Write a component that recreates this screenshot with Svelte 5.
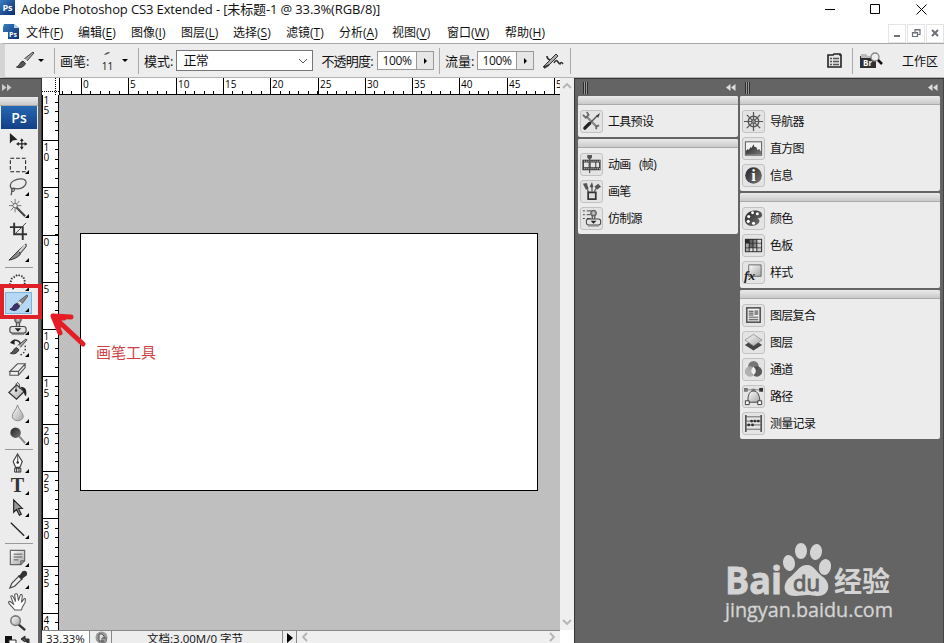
<script lang="ts">
  type Item = { icon: string; label: string };

  const menus = [
    { label: "文件", key: "F", width: 52 },
    { label: "编辑", key: "E", width: 53 },
    { label: "图像", key: "I", width: 50 },
    { label: "图层", key: "L", width: 52 },
    { label: "选择", key: "S", width: 53 },
    { label: "滤镜", key: "T", width: 53 },
    { label: "分析", key: "A", width: 53 },
    { label: "视图", key: "V", width: 55 },
    { label: "窗口", key: "W", width: 58 },
    { label: "帮助", key: "H", width: 50 },
  ];

  const toolGroups = [
    ["move", "marquee", "lasso", "wand", "crop", "slice"],
    ["heal", "brush", "stamp", "history", "eraser", "bucket", "blur", "dodge"],
    ["pen", "type", "select", "line"],
    ["notes", "eyedropper", "hand", "zoom"],
  ];
  const noFlyout = ["move", "crop", "hand", "zoom"];
  let activeTool = $state("brush");

  const leftPanels: Item[][] = [
    [{ icon: "presets", label: "工具预设" }],
    [
      { icon: "animation", label: "动画 (帧)" },
      { icon: "brushes", label: "画笔" },
      { icon: "clone", label: "仿制源" },
    ],
  ];
  const rightPanels: Item[][] = [
    [
      { icon: "navigator", label: "导航器" },
      { icon: "histogram", label: "直方图" },
      { icon: "info", label: "信息" },
    ],
    [
      { icon: "color", label: "颜色" },
      { icon: "swatches", label: "色板" },
      { icon: "styles", label: "样式" },
    ],
    [
      { icon: "comps", label: "图层复合" },
      { icon: "layers", label: "图层" },
      { icon: "channels", label: "通道" },
      { icon: "paths", label: "路径" },
      { icon: "log", label: "测量记录" },
    ],
  ];

  // Rulers: 5 units every 47.3px
  const step = 47.3;
  const hMajor = Array.from({ length: 11 }, (_, i) => ({ x: Math.round(22 + i * step), n: i * 5 }));
  const hMinor = Array.from({ length: 53 }, (_, i) => Math.round(3 + i * (step / 5)));
  const vMajor = Array.from({ length: 12 }, (_, i) => ({
    y: Math.round(-2.3 + i * step),
    digits: String(Math.abs(i * 5 - 15)).split(""),
  }));
  const vMinor = Array.from({ length: 56 }, (_, i) => Math.round(7 + i * (step / 5)));

  const brushArt =
    '<path d="M20 2L11 9l2 3L21 3z" fill="#a5a5a5" stroke="#333" stroke-width=".9"/><path d="M11 9l3 3" stroke="#fff" stroke-width="1.500"/><path d="M10 11l2.500 2.500c-2 4-6 5-9 3.500 3-.5 3-5 6.500-6z" fill="#555" stroke="#222" stroke-width=".9"/>';
  const stampArt =
    '<path d="M10 8v5M13 8v5" stroke="#555" stroke-width="1.500"/><circle cx="11.500" cy="5" r="3.500" fill="url(#ball)" stroke="#555"/><rect x="3" y="12" width="17" height="7" rx="2.500" fill="#e4e4e4" stroke="#444" stroke-width="1.200"/><path d="M8 14h7l-3.500 3.500z" fill="#222"/><path d="M5 20.500h13" stroke="#888"/>';

  const icons: Record<string, string> = {
    move: '<path d="M3 1v11l3-3 5-1z" fill="#222"/><path d="M15.500 8v9M11 12.500h9" stroke="#222" stroke-width="1.200"/><path d="M15.500 6.500l-2 3h4zM15.500 18.500l-2-3h4zM9.500 12.500l3-2v4zM21.500 12.500l-3-2v4z" fill="#222"/>',
    marquee: '<rect x="3.500" y="4.500" width="16" height="14" fill="none" stroke="#222" stroke-width="1.100" stroke-dasharray="4 2"/>',
    lasso: '<path d="M6 14C2 12 3 7 7 5c5-3 13-3 13 2-1 6-8 7-12 6-2-1-4 1-3 3 3 1 4-3 1-3-2 1 0 4-2 7" fill="none" stroke="#555" stroke-width="1.300"/>',
    wand: '<path d="M9 9l10 10" stroke="#444" stroke-width="2.200"/><path d="M8.500 1v14M2 8h13M4 3l9 10M13 3L4 13" stroke="#666" stroke-width=".9"/><circle cx="8.500" cy="8" r="2.300" fill="#eee" stroke="#666"/>',
    crop: '<path d="M7.500 3v12H21M3 7.500h13.500V21" fill="none" stroke="#333" stroke-width="2"/><path d="M8 15L20 3" stroke="#444"/>',
    slice: '<path d="M20 2l-8 7 2 3 6-7z" fill="#bbb" stroke="#333"/><path d="M12 9L2 19c6-1 9-3 12-6z" fill="#888" stroke="#333"/><path d="M19 3l-7 8" stroke="#fff"/>',
    heal: '<path d="M7 19L3 14l2-6 6-4 6 2 2 6-3 6" fill="#f4f4f4" stroke="#333" stroke-width="2" stroke-dasharray="1.500 1.500"/>',
    brush: '<path d="M21 2l-8 6-3 4 2 2 4-3 6-8z" fill="#8a8985" stroke="#444" stroke-width=".8"/><path d="M12 9l3 3" stroke="#eee" stroke-width="2"/><path d="M10 11l3 3c-2 5-6 5-10 3 3 0 3-5 7-6z" fill="#41306e" stroke="#28233c"/>',
    stamp: stampArt,
    history: brushArt + '<path d="M5 5c4-3 8-1 9 2" fill="none" stroke="#333" stroke-width="1.600"/><path d="M3 6l5-4v6z" fill="#222"/><path d="M19 9c1 5-1 8-5 10" fill="none" stroke="#222" stroke-width="1.300" stroke-dasharray="1.500 2"/>',
    eraser: '<path d="M3 13L11 5h8l-7 8zM3 13v4h9v-4M12 17l7-8V5" fill="#eee" stroke="#555" stroke-width="1.200"/>',
    bucket: '<path d="M10 4L2 12l8 7 8-8z" fill="url(#metal)" stroke="#333" stroke-width="1.300"/><path d="M9.500 10V3q2-3 3.500 1v4" fill="none" stroke="#444"/><path d="M14 6c6 0 7 4 6 10-2-1-2-3-3-6" fill="#222"/><circle cx="9.500" cy="10" r="1.300" fill="#222"/>',
    blur: '<path d="M11 2c-1 5-5.500 8-5.500 12 0 6 11.500 6 11.500 0 0-4-5-7-6-12z" fill="url(#metal)" stroke="#888"/>',
    dodge: '<path d="M12 11l7 8" stroke="#888" stroke-width="2"/><circle cx="9" cy="8" r="5.500" fill="url(#dark)"/>',
    pen: '<path d="M11 1L6.500 9 9 15h4.500L16 9z" fill="#fff" stroke="#444" stroke-width="1.200"/><path d="M11.200 2v8" stroke="#444"/><circle cx="11.200" cy="10" r="1.300" fill="#222"/><path d="M8 16h6.500v4H8zM10 16v4M12.500 16v4" fill="#ddd" stroke="#333"/>',
    type: '<text x="11" y="18" font-family="Liberation Serif, serif" font-weight="bold" font-size="21" text-anchor="middle" fill="#333">T</text>',
    select: '<path d="M7 3v13l3-3 3 6 2-1-3-6h4z" fill="#999" stroke="#222" stroke-width="1.200"/>',
    line: '<path d="M4 4l14 13.500" stroke="#222" stroke-width="1.400"/>',
    notes: '<path d="M3.500 3.500h15v11l-4 4h-11z" fill="url(#metal)" stroke="#666" stroke-width="1.200"/><path d="M7 7.500h9M7 10.500h9M7 13.500h5M14.500 18.500v-4h4" stroke="#555" fill="none"/>',
    eyedropper: '<path d="M13 7L5 15l-2 5 5-2 8-8" fill="#eee" stroke="#444" stroke-width="1.200"/><path d="M12 7l4 4M14 7l3-4q4-1 3 3l-4 3z" fill="#333" stroke="#333" stroke-width="1.800"/>',
    hand: '<path d="M8 20C6 16 0 13 2 11c2-1 4 3 5 3L4 6c0-2 2-1 3 1l2 4-1-7c1-2 3-1 3 0l1 6 2-6c2-1 2 1 2 2l-1 6 3-4c2-1 1 2 1 4l-3 5-1 3z" fill="#fff" stroke="#555" stroke-width="1.100"/>',
    zoom: '<path d="M12 12l7 6" stroke="#333" stroke-width="2.500"/><circle cx="9" cy="8" r="5" fill="url(#metal)" stroke="#777" stroke-width="1.600"/>',

    presets: '<path d="M6 6l11 11" stroke="#888" stroke-width="2.500"/><path d="M17 5l-8 8" stroke="#555" stroke-width="1.500"/><path d="M9 13l-5 5" stroke="#222" stroke-width="3.500" stroke-linecap="round"/><path d="M2 4l3 3 3-3-2-3M16 19l0-3 3-1" stroke="#666" stroke-width="1.800"/><path d="M16 5l4-3-2 5z" fill="#333"/>',
    animation: '<rect x="1.500" y="6" width="19" height="11" fill="#333"/><path d="M3 9h5v5H3zM10 9h5v5h-5zM16 9h3v5h-3z" fill="#e5e5e5"/><path d="M3 7.500h17M3 15.500h17" stroke="#fff" stroke-dasharray="1 1"/><path d="M9 2v18" stroke="#555" stroke-width="1.300"/><path d="M6.500 1h5v3L9 6 6.500 4z" fill="#555"/>',
    brushes: '<path d="M8 12L5 5M11.500 11V6M14 11l3-5" stroke="#666" stroke-width="1.500"/><path d="M2 3l4-1 2 6-3 1zM9 6l2.500-5L13 6l-2 1zM14 6l4-3 3 3-4 3z" fill="#555"/><path d="M7.500 12h8v7h-8z" fill="#ddd" stroke="#333" stroke-width="1.800"/>',
    clone: '<path d="M2 3h2M6 3h5M2 7h2M6 7h4M2 11h2M6 11h4" stroke="#444"/>' + `<g transform="translate(3 1) scale(.88)">${stampArt}</g>`,
    navigator: '<path d="M11 1v20M1 11h20M4 4l14 14M18 4L4 18" stroke="#555" stroke-width="1.300"/><circle cx="11" cy="11" r="5.500" stroke="#555" stroke-width="1.500"/><circle cx="11" cy="11" r="2" fill="#999" stroke="#444"/>',
    histogram: '<rect x="2.500" y="4" width="17" height="14" fill="#f2f2f2" stroke="#555"/><path d="M3 17.500v-4l2-2 1 1 2-3 1 1 2-4 1 3 2 0 1 3 2-1 2 3v3z" fill="url(#dark)"/>',
    info: '<circle cx="11" cy="11" r="8.700" fill="url(#dark)"/><text x="11" y="17" text-anchor="middle" font-family="Liberation Serif, serif" font-weight="bold" font-size="17" fill="#fff">i</text>',
    color: '<path d="M18 4c-5-3-15-1-16 7-1 7 7 10 13 6 3-2 3-5 0-6 5 0 7-4 3-7z" fill="url(#dark)"/><g fill="#fff"><circle cx="6" cy="9" r="1.600"/><circle cx="10" cy="5" r="1.500"/><circle cx="15" cy="6" r="1.600"/><circle cx="5.500" cy="14" r="1.600"/><circle cx="11" cy="16" r="1.600"/></g>',
    swatches: '<rect x="2" y="4" width="18" height="14" fill="#2a2a2a"/><path d="M3 9h3v4H3zM3 14h3v3H3z" fill="#aaa"/><path d="M7 5h3v3H7zM7 9h3v4H7z" fill="#666"/><path d="M7 14h3v3H7zM11 14h3v3h-3zM15 5h4v3h-4z" fill="#ddd"/><path d="M11 5h3v3h-3zM11 9h3v4h-3z" fill="#888"/><path d="M15 9h4v4h-4zM15 14h4v3h-4z" fill="#ccc"/>',
    styles: '<path d="M6 3h13v12H6z" fill="url(#metal)" stroke="#666"/><text x="1" y="18.500" font-family="Liberation Serif, serif" font-style="italic" font-weight="bold" font-size="14" fill="#222">fx</text>',
    comps: '<rect x="4" y="3" width="14" height="15" fill="#f4f4f4" stroke="#555" stroke-width="1.700"/><path d="M6 6.500h5M6 8.500h5M6 10.500h5M6 15.500h10" stroke="#333"/><path d="M12 5.500h4v5h-4zM6 12h10v2H6z" fill="#888"/>',
    layers: '<path d="M2 13.500l9-6 9 6-9 6z" fill="#444"/><path d="M2 8.500l9-6 9 6-9 6z" fill="url(#metal)" stroke="#888" stroke-width=".8"/>',
    channels: '<circle cx="11" cy="7.500" r="5.500" fill="#777"/><circle cx="7.500" cy="13" r="5.500" fill="#aaa" opacity=".9"/><circle cx="14.500" cy="13" r="5.500" fill="#444" opacity=".85"/><path d="M11 8q5 4 0 9-5-5 0-9z" fill="#eee"/>',
    paths: '<path d="M5 17q0-12 6-12t7 12z" fill="url(#metal)" stroke="#444"/><path d="M3 4h16" stroke="#888"/><path d="M1 2h4v4H1zM9 3h4v3H9z" fill="#777"/><path d="M17 2h4v4h-4z" fill="#333"/><path d="M2.500 15.500h4v4h-4zM15.500 15.500h4v4h-4z" fill="#fff" stroke="#333"/>',
    log: '<path d="M3 3h16v14H3z" fill="#e5e5e5"/><path d="M3 2v18M19 2v18" stroke="#333" stroke-width="1.400"/><path d="M3 4h16M3 8.500h16M3 12.500h16M3 17h16" stroke="#555" stroke-width=".9"/><g fill="#333"><circle cx="9" cy="8.500" r="1.500"/><circle cx="12.500" cy="8.500" r="1.500"/><circle cx="16" cy="8.500" r="1.500"/><circle cx="6" cy="12.500" r="1.500"/><circle cx="10" cy="12.500" r="1.500"/></g>',
    optionBrush: brushArt,
  };
</script>

{#snippet icon(name: string)}
  <svg class="icon" width="22" height="22" viewBox="0 0 22 22" fill="none">{@html icons[name]}</svg>
{/snippet}

{#snippet column(groups: Item[][])}
  <div class="column">
    <div class="dock-head">
      <svg width="7" height="12"><path d="M1.500 0v12M3.500 0v12M5.500 0v12" stroke="#2c2c2c" /><path d="M2.500 0v12M4.500 0v12" stroke="#999" /></svg>
      <svg width="10" height="8"><path d="M4.500 0v7L0 3.500zM9.500 0v7L5 3.500z" fill="#ddd" /></svg>
    </div>
    {#each groups as group}
      <div class="panel">
        <div class="grip"></div>
        {#each group as item}
          <div class="panel-item">
            <span class="icon-box">{@render icon(item.icon)}</span>
            <span class="panel-label">{item.label}</span>
          </div>
        {/each}
      </div>
    {/each}
  </div>
{/snippet}

<svg class="defs" width="0" height="0">
  <defs>
    <linearGradient id="metal" x1="0" y1="0" x2="1" y2="1"><stop stop-color="#fff" /><stop offset="1" stop-color="#a5a5a5" /></linearGradient>
    <linearGradient id="dark" x1="0" y1="0" x2="1" y2="1"><stop stop-color="#222" /><stop offset="1" stop-color="#777" /></linearGradient>
    <radialGradient id="ball"><stop stop-color="#ddd" /><stop offset="1" stop-color="#666" /></radialGradient>
    <linearGradient id="blue" x1="0" y1="0" x2="1" y2="1"><stop stop-color="#397fc0" /><stop offset="1" stop-color="#0b2c70" /></linearGradient>
  </defs>
</svg>

<div class="app">
  <header class="titlebar">
    <svg class="app-logo" width="16" height="16"><rect width="15" height="15" fill="url(#blue)" /><text x="7.500" y="11" font-size="9" font-weight="bold" text-anchor="middle" fill="#fff">Ps</text></svg>
    <span class="title">Adobe Photoshop CS3 Extended - [未标题-1 @ 33.3%(RGB/8)]</span>
    <svg class="window-controls" width="104" height="12" fill="none" stroke="#000">
      <path d="M0 6.500h10M45.500 1.500h9v9h-9zM91.500 1.500l10 10M101.500 1.500l-10 10" />
    </svg>
  </header>

  <nav class="menubar">
    <svg class="doc-logo" width="17" height="16"><path d="M1 0h10l5 4v11H5V8H0V3z" fill="url(#blue)" /><path d="M11 0v4h5" fill="#b8d4ef" /><text x="10" y="13" font-size="7" font-weight="bold" text-anchor="middle" fill="#fff">Ps</text></svg>
    {#each menus as menu}
      <span class="menu" style:width="{menu.width}px">{menu.label}(<u>{menu.key}</u>)</span>
    {/each}
    <div class="doc-controls">
      <span><svg width="16" height="17"><path d="M5 11h6" stroke="#6c7077" stroke-width="2" /></svg></span>
      <span><svg width="16" height="17"><path d="M7 7V4.500h5v5h-2M4.500 7.500h5v4h-5zM4 8h6M7 5h5" fill="none" stroke="#6c7077" stroke-width="1.200" /></svg></span>
      <span><svg width="16" height="17"><path d="M5 5l6 6M11 5l-6 6" stroke="#6c7077" stroke-width="2" /></svg></span>
    </div>
  </nav>

  <div class="options">
    <div class="cell current">{@render icon("optionBrush")}<i class="down"></i></div>
    <div class="cell brush-cell">
      <span>画笔:</span>
      <span class="brush-size"><svg width="8" height="8"><path d="M1 4q2-3 6-3-1 2-6 3z" fill="#444" /></svg>11</span>
      <i class="down"></i>
    </div>
    <div class="cell blend-cell">
      <span>模式:</span>
      <div class="select">正常<svg width="10" height="6"><path d="M1 1l4 4 4-4" fill="none" stroke="#555" /></svg></div>
      <span class="opacity-label">不透明度:</span>
      <div class="spin"><span>100%</span><b></b></div>
    </div>
    <div class="cell flow-cell">
      <span>流量:</span>
      <div class="spin"><span>100%</span><b></b></div>
      <svg width="22" height="20" viewBox="0 0 22 20" fill="none"><path d="M1 16l4-4 9-9 2 2-9 9z" fill="#aaa" stroke="#333" /><path d="M5 5q0 3 3 4M2 17l5-3M12 12c3-6 4 1 6 1q1-3 3 0" stroke="#333" stroke-width="1.600" /></svg>
    </div>
    <div class="cell palette-cell">
      <svg width="15" height="15"><path d="M1 2h5l1-1h6v1h1v12H1z" fill="#e5e5e5" stroke="#222" stroke-width="1.600" /><path d="M3 5.500h2M6 5.500h6M3 8.500h2M6 8.500h6M3 11.500h2M6 11.500h6" stroke="#555" stroke-width="1.400" /></svg>
    </div>
    <div class="workspace-cell">
      <svg width="23" height="17" viewBox="0 0 23 17"><path d="M0 4h16v12H0z" fill="#303030" /><path d="M1 2h5l2 2h7v2H1z" fill="#bbb" /><text x="3" y="14" font-size="8" font-weight="bold" fill="#fff">Br</text><circle cx="15" cy="5" r="4" fill="#eee" stroke="#888" stroke-width="1.300" /><path d="M18 8l4 4" stroke="#111" stroke-width="2.500" /></svg>
      <span>工作区</span>
    </div>
  </div>

  <main class="workspace">
    <aside class="toolbox">
      <div class="toolbox-head"><svg width="10" height="8"><path d="M0 0v7l4.500-3.500zM5 0v7l4.500-3.500z" fill="#ccc" /></svg></div>
      <div class="toolbox-body">
        <div class="grip"></div>
        <div class="ps">Ps</div>
        {#each toolGroups as group}
          <div class="tool-group">
            {#each group as tool}
              <button class="tool" class:active={activeTool === tool} aria-label={tool} onclick={() => (activeTool = tool)}>
                {@render icon(tool)}
                {#if !noFlyout.includes(tool)}<i class="flyout"></i>{/if}
              </button>
            {/each}
          </div>
        {/each}
        <svg class="swatch-icons" width="28" height="10"><path d="M0 2h7v7H0z" fill="#111" /><path d="M4 6h7v5H4z" fill="#fff" stroke="#333" /><path d="M18 5h6v6M20 2l-4 3 4 3z" fill="#333" stroke="#333" /></svg>
      </div>
    </aside>

    <section class="document">
      <svg class="corner" width="17" height="17"><path d="M0 13.500h17M13.500 0v17" stroke="#000" stroke-dasharray="1 1" /></svg>
      <svg class="ruler" width="501" height="17">
        <path d="M0 16.500h501M.5 0v17" stroke="#000" />
        {#each hMinor as x}<path d="M{x + 0.5} 13v4" stroke="#000" />{/each}
        {#each hMajor as tick}
          <path d="M{tick.x + 0.5} 0v17" stroke="#000" />
          <text x={tick.x + 2} y="10">{tick.n}</text>
        {/each}
      </svg>
      <div class="scroll vertical">
        <svg width="10" height="6"><path d="M1 5l4-4 4 4" /></svg>
        <svg width="10" height="6"><path d="M1 1l4 4 4-4" /></svg>
      </div>
      <svg class="ruler side" width="17" height="535">
        <path d="M16.500 0v535M.5 0v535" stroke="#000" />
        {#each vMinor as y}<path d="M13 {y + 0.5}h4" stroke="#000" />{/each}
        {#each vMajor as tick}
          <path d="M0 {tick.y + 0.5}h17" stroke="#000" />
          {#each tick.digits as digit, i}<text x="1.500" y={tick.y + 11 + i * 10}>{digit}</text>{/each}
        {/each}
      </svg>
      <div class="pasteboard"><div class="canvas"></div></div>
      <footer class="status">
        <span class="zoom-value">33.33%</span>
        <span class="status-icon"><svg width="13" height="13"><circle cx="6.500" cy="6.500" r="6" fill="#999" /><path d="M4 3h3l2 2v5H4zM7 7h4v4H7z" fill="#ddd" stroke="#555" /></svg></span>
        <span class="doc-size">文档:3.00M/0 字节</span>
        <span class="status-arrow"><svg width="7" height="10"><path d="M0 0v10l6-5z" /></svg></span>
        <div class="scroll horizontal">
          <svg width="6" height="10"><path d="M5 1L1 5l4 4" /></svg>
          <svg width="6" height="10"><path d="M1 1l4 4-4 4" /></svg>
        </div>
      </footer>
    </section>

    <aside class="dock">
      {@render column(leftPanels)}
      {@render column(rightPanels)}
    </aside>
  </main>

  <div class="highlight"></div>
  <svg class="arrow" width="42" height="40"><path d="M36 34L8 8M6 6l18 1M6 6l7 17M8 8l9 0M9 9l3 7" fill="none" stroke="#e51e25" stroke-width="5" stroke-linecap="round" /></svg>
  <span class="note">画笔工具</span>

  <svg class="watermark" width="180" height="90" fill="#d4d4d4">
    <text class="bai" x="5" y="53" font-size="37" font-weight="bold" textLength="57" lengthAdjust="spacingAndGlyphs">Bai</text>
    <ellipse cx="69" cy="22" rx="6" ry="8" transform="rotate(-10 69 22)" />
    <ellipse cx="81" cy="10" rx="6" ry="8" />
    <ellipse cx="96" cy="11" rx="6" ry="8" transform="rotate(10 96 11)" />
    <ellipse cx="105" cy="26" rx="6" ry="8" transform="rotate(12 105 26)" />
    <path d="M87 24c7 0 10 8 16 12 9 7 6 19-5 19-5 0-7-1-11-1s-7 1-12 1c-12 0-13-11-6-18 7-5 10-13 18-13z" />
    <text class="du" x="73" y="50" font-size="22" textLength="27" lengthAdjust="spacingAndGlyphs">du</text>
    <text class="cjk" x="114" y="51" font-size="28" font-weight="bold" textLength="56" lengthAdjust="spacingAndGlyphs">经验</text>
    <text class="url" x="5" y="76" font-size="20" textLength="168" lengthAdjust="spacingAndGlyphs">jingyan.baidu.com</text>
  </svg>
</div>

<style>
  :global(body) {
    margin: 0;
    overflow: hidden;
  }

  .app {
    position: relative;
    width: 944px;
    height: 643px;
    display: flex;
    flex-direction: column;
    overflow: hidden;
    background: #fff;
    color: #111;
    font: 13px "Open Sans", "Noto Sans CJK SC", sans-serif;
  }

  .app * {
    box-sizing: border-box;
  }

  svg {
    display: block;
    flex: none;
  }

  .defs {
    position: absolute;
  }

  .titlebar {
    height: 21px;
    display: flex;
    align-items: center;
  }

  .app-logo {
    margin-top: -5px;
  }

  .title {
    margin: -3px 0 0 5px;
    font-size: 13px;
    letter-spacing: -0.13px;
    white-space: nowrap;
    line-height: 20px;
  }

  .window-controls {
    margin-left: auto;
    margin-right: 15px;
    margin-top: -3px;
  }

  .menubar {
    height: 22px;
    display: flex;
    align-items: center;
    padding-left: 3px;
    font-size: 12px;
  }

  .doc-logo {
    margin-right: 6px;
  }

  .menu {
    white-space: nowrap;
    line-height: 20px;
    padding-top: 2px;
  }

  .menu u {
    text-underline-offset: 2px;
  }

  .doc-controls {
    margin-left: auto;
    margin-top: 2px;
    display: flex;
    gap: 1px;
  }

  .doc-controls span {
    border: 1px solid #e4e4e4;
  }

  .options {
    height: 35px;
    display: flex;
    align-items: center;
    background: #ededed;
    border-top: 1px solid #a8a8a8;
    border-bottom: 1px solid #b4b4b4;
    border-left: 5px solid #d4d4d4;
    white-space: nowrap;
  }

  .cell {
    height: 26px;
    display: flex;
    align-items: center;
    border-right: 1px solid #aaa;
  }

  .down {
    width: 0;
    border: 3px solid transparent;
    border-top: 3px solid #000;
    border-bottom: 0;
  }

  .current {
    width: 50px;
    padding-left: 8px;
    gap: 3px;
  }

  .brush-cell {
    width: 84px;
    padding-left: 5px;
  }

  .brush-size {
    width: 14px;
    margin: 2px 8px 0 11px;
    display: flex;
    flex-direction: column;
    align-items: center;
    gap: 2px;
    font-size: 10px;
    line-height: 11px;
  }

  .blend-cell {
    width: 301px;
    padding-left: 5px;
  }

  .select {
    width: 137px;
    height: 21px;
    margin-left: 3px;
    padding: 0 4px 0 6px;
    display: flex;
    align-items: center;
    justify-content: space-between;
    border: 1px solid #777;
    background: #fff;
    line-height: 19px;
    letter-spacing: -0.7px;
  }

  .opacity-label {
    width: 56px;
    margin-left: 8px;
    letter-spacing: -0.8px;
  }

  .spin {
    width: 57px;
    height: 19px;
    display: flex;
    border: 1px solid #999;
    background: #fff;
    font-size: 12px;
    line-height: 17px;
    letter-spacing: -0.3px;
  }

  .spin span {
    flex: 1;
    padding-left: 4px;
  }

  .spin b {
    width: 17px;
    display: flex;
    align-items: center;
    justify-content: center;
    border-left: 1px solid #999;
    background: #e6e6e6;
  }

  .spin b::after {
    content: "";
    border: 3px solid transparent;
    border-left-color: #000;
    border-right: 0;
  }

  .flow-cell {
    width: 131px;
    padding-left: 5px;
  }

  .flow-cell .spin {
    margin: 0 8px 0 3px;
  }

  .palette-cell {
    flex: 1;
    justify-content: flex-end;
    padding-right: 10px;
  }

  .workspace-cell {
    width: 91px;
    display: flex;
    align-items: center;
    gap: 19px;
    padding-left: 7px;
    font-size: 12px;
  }

  .workspace {
    height: 565px;
    display: flex;
  }

  .toolbox {
    width: 42px;
    flex: none;
    background: #646464;
    border-top: 1px solid #333;
    border-right: 1px solid #333;
  }

  .toolbox-head {
    height: 18px;
    padding: 5px 2px;
  }

  .toolbox-body {
    width: 38px;
    height: 547px;
    background: #ececec;
    display: flex;
    flex-direction: column;
    align-items: flex-start;
  }

  .grip {
    width: 100%;
    height: 9px;
    flex: none;
    background: linear-gradient(#eaeaea, #cacaca);
    border-bottom: 1px solid #aaa;
    border-radius: 2px 2px 0 0;
  }

  .ps {
    width: 36px;
    height: 23px;
    margin: 0 1px 2px;
    background: linear-gradient(#2768b2, #123f86);
    color: #fff;
    font-size: 14px;
    font-weight: 600;
    line-height: 23px;
    text-align: center;
  }

  .tool-group {
    margin-left: 5px;
  }

  .tool-group + .tool-group {
    width: 28px;
    margin-top: 3px;
    border-top: 1px solid #999;
    padding-top: 2px;
  }

  .ps + .tool-group + .tool-group {
    margin-top: 4px;
  }

  .tool {
    position: relative;
    width: 27px;
    height: 22px;
    display: flex;
    align-items: center;
    padding: 0 0 0 2px;
    border: 0;
    background: none;
  }

  .tool .icon {
    width: 21px;
    height: 21px;
  }

  .tool.active {
    background: #b5d8f4;
    border: 1px solid #7eb4da;
    padding-left: 1px;
  }

  .flyout {
    position: absolute;
    right: 3px;
    bottom: 1px;
    border: 2px solid #000;
    border-top-color: transparent;
    border-left-color: transparent;
  }

  .tool.active .flyout {
    right: 2px;
  }

  .swatch-icons {
    margin-left: 5px;
  }

  .document {
    width: 532px;
    flex: none;
    display: grid;
    grid-template-columns: 17px 501px 14px;
    grid-template-rows: 17px 535px 13px;
    background: #fff;
  }

  .ruler {
    font: 10px "Open Sans", sans-serif;
    background: #fff;
  }

  .side {
    grid-row: 2;
  }

  .vertical {
    grid-column: 3;
    grid-row: 1 / 3;
    flex-direction: column;
  }

  .scroll {
    display: flex;
    align-items: center;
    justify-content: space-between;
    background: #efefef;
    padding: 5px 0;
  }

  .scroll path {
    fill: none;
    stroke: #b4b4b4;
    stroke-width: 1.8;
  }

  .pasteboard {
    grid-row: 2;
    grid-column: 2;
    background: #bfbfbf;
    padding: 138px 0 0 21px;
  }

  .canvas {
    width: 458px;
    height: 258px;
    border: 1px solid #000;
    background: #fff;
  }

  .status {
    grid-column: 1 / 3;
    display: flex;
    border-top: 1px solid #888;
    font-size: 11.5px;
    line-height: 15px;
    background: #ededed;
    overflow: hidden;
  }

  .status > span {
    border-right: 1px solid #888;
    height: 18px;
    white-space: nowrap;
  }

  .zoom-value {
    width: 48px;
    padding-left: 4px;
    background: #fff;
  }

  .status-icon {
    width: 22px;
    padding-left: 5px;
  }

  .doc-size {
    width: 171px;
    padding-right: 4px;
    text-align: center;
  }

  .status-arrow {
    width: 14px;
    padding: 2px 4px;
  }

  .horizontal {
    flex: 1;
    padding: 0 5px;
  }

  .dock {
    flex: 1;
    display: flex;
    gap: 2px;
    padding: 0 3px;
    background: #646464;
    border-top: 1px solid #333;
    border-left: 1px solid #333;
    border-right: 1px solid #444;
  }

  .column {
    width: 160px;
    display: flex;
    flex-direction: column;
    gap: 2px;
  }

  .column + .column {
    width: 200px;
  }

  .dock-head {
    height: 15px;
    padding: 3px 2px 0 4px;
    display: flex;
    align-items: center;
    justify-content: space-between;
  }

  .panel {
    padding-bottom: 2px;
    background: #ececec;
    border-radius: 2px;
  }

  .panel .grip {
    margin-bottom: 3px;
  }

  .panel-item {
    height: 27px;
    display: flex;
    align-items: center;
    gap: 5px;
    padding-left: 2px;
  }

  .icon-box {
    width: 23px;
    height: 23px;
    display: grid;
    place-items: center;
    border: 1px solid #c2c2c2;
    border-radius: 3px;
    background: #e4e4e4;
  }

  .icon-box .icon {
    width: 21px;
    height: 21px;
  }

  .panel-label {
    font-size: 12px;
    letter-spacing: -0.7px;
    word-spacing: 6px;
    line-height: 20px;
  }

  .highlight {
    position: absolute;
    left: 0;
    top: 284px;
    width: 42px;
    height: 35px;
    border: 4px solid #df2029;
  }

  .arrow {
    position: absolute;
    left: 47px;
    top: 310px;
  }

  .note {
    position: absolute;
    left: 96px;
    top: 342px;
    color: #cf3f45;
    font-size: 15px;
    line-height: 20px;
  }

  .watermark {
    position: absolute;
    left: 720px;
    top: 541px;
  }

  .watermark text {
    font-family: "Open Sans", sans-serif;
  }

  .watermark .bai {
    stroke: #d4d4d4;
    stroke-width: 0.8;
  }

  .watermark .du {
    fill: #646464;
    stroke: #646464;
    stroke-width: 1;
  }

  .watermark .url {
    stroke: #d4d4d4;
    stroke-width: 0.3;
  }

  .watermark .cjk {
    font-family: "Noto Sans CJK SC", sans-serif;
  }
</style>
